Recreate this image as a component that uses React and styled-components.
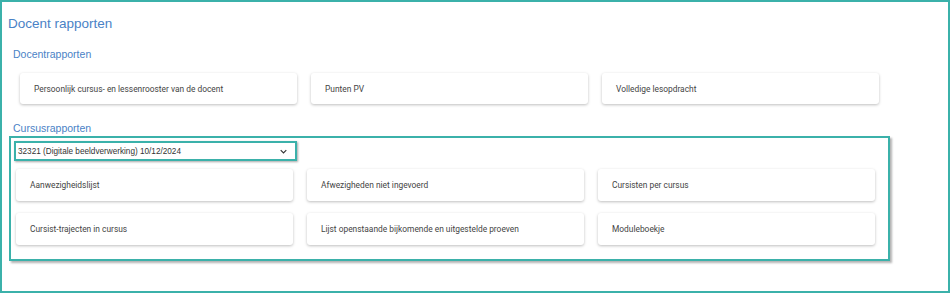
import styled, { createGlobalStyle } from 'styled-components';

const docentRapporten = [
    'Persoonlijk cursus- en lessenrooster van de docent',
    'Punten PV',
    'Volledige lesopdracht',
];

const cursusRapporten = [
    'Aanwezigheidslijst',
    'Afwezigheden niet ingevoerd',
    'Cursisten per cursus',
    'Cursist-trajecten in cursus',
    'Lijst openstaande bijkomende en uitgestelde proeven',
    'Moduleboekje',
];

export default function App() {
    return (
        <>
            <GlobalStyle />
            <Frame>
                <Title>Docent rapporten</Title>
                <SectionTitle>Docentrapporten</SectionTitle>
                <CardGrid $pad="0 0 0 12px">
                    {docentRapporten.map((r) => (
                        <Card key={r}>{r}</Card>
                    ))}
                </CardGrid>
                <SectionTitle $top="17px">Cursusrapporten</SectionTitle>
                <Highlight>
                    <Select>
                        <span>32321 (Digitale beeldverwerking) 10/12/2024</span>
                        <Chevron viewBox="0 0 10 6">
                            <path d="M1 1 L5 5 L9 1" fill="none" stroke="#333" strokeWidth="1.6" />
                        </Chevron>
                    </Select>
                    <CardGrid $pad="0 0 0 2px" $rowGap="12px" $top="8px">
                        {cursusRapporten.map((r) => (
                            <Card key={r} $h="32px">{r}</Card>
                        ))}
                    </CardGrid>
                </Highlight>
            </Frame>
        </>
    );
}

const GlobalStyle = createGlobalStyle`
  body {
    margin: 0;
    background: #fff;
    font-family: "Liberation Sans", Arial, sans-serif;
  }
`;

const Frame = styled.div`
  box-sizing: border-box;
  width: 950px;
  height: 293px;
  border: 2px solid #3bb1aa;
  padding: 14px 0 0 6px;
`;

const Title = styled.div`
  font-size: 13.5px;
  line-height: 16px;
  color: #4a82c6;
`;

const SectionTitle = styled.div`
  margin: ${(p) => p.$top || '15px'} 0 0 5px;
  font-size: 10.5px;
  line-height: 14px;
  color: #4a82c6;
`;

const CardGrid = styled.div`
  display: grid;
  grid-template-columns: repeat(3, 277px);
  column-gap: 14px;
  row-gap: ${(p) => p.$rowGap || '0'};
  margin-top: ${(p) => p.$top || '12px'};
  padding: ${(p) => p.$pad};
`;

const Card = styled.div`
  box-sizing: border-box;
  height: ${(p) => p.$h || '31px'};
  display: flex;
  align-items: center;
  padding-left: 14px;
  background: #fff;
  border-radius: 3px;
  box-shadow: 0 1px 3px rgba(0, 0, 0, 0.26);
  font-family: Roboto, "Liberation Sans", sans-serif;
  font-size: 8.4px;
  color: #444;
`;

const Highlight = styled.div`
  box-sizing: border-box;
  width: 881px;
  height: 125px;
  margin: 1px 0 0 1px;
  border: 2px solid #3bb1aa;
  box-shadow: 2px 2px 2px rgba(0, 0, 0, 0.3);
  padding: 3px 0 0 3px;
`;

const Select = styled.div`
  box-sizing: border-box;
  width: 283px;
  height: 20px;
  display: flex;
  align-items: center;
  justify-content: space-between;
  padding: 0 8px 0 2px;
  border: 2px solid #3bb1aa;
  box-shadow: 1px 1px 2px rgba(0, 0, 0, 0.35);
  background: #fff;
  font-size: 8.2px;
  color: #333;
`;

const Chevron = styled.svg`
  width: 7px;
  height: 5px;
`;
